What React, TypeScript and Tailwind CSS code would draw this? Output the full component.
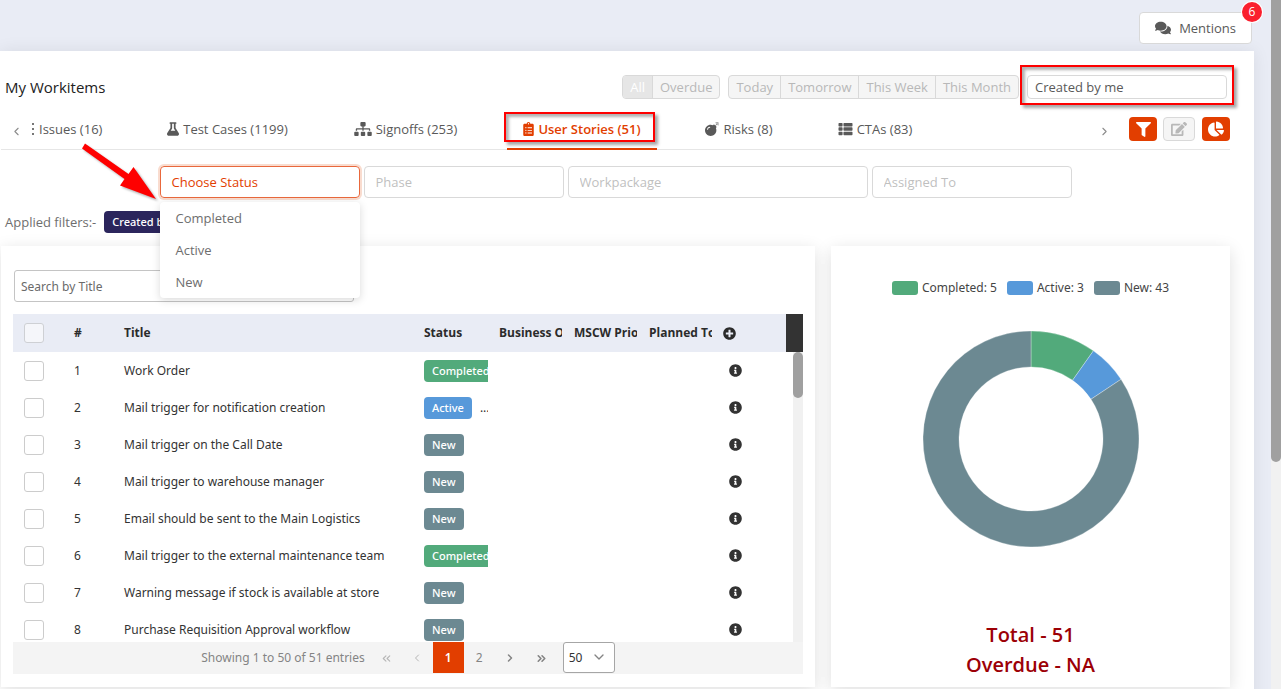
import React, { useState } from "react";
import {
  FaBomb,
  FaChartPie,
  FaClipboardList,
  FaComments,
  FaEdit,
  FaFilter,
  FaFlask,
  FaInfoCircle,
  FaPlusCircle,
  FaSitemap,
  FaThList,
} from "react-icons/fa";
import { ChevronDown, ChevronLeft, ChevronRight, ChevronsLeft, ChevronsRight } from "lucide-react";

type Status = "Completed" | "Active" | "New";

const statusBg: Record<Status, string> = {
  Completed: "bg-[#52aa7b]",
  Active: "bg-[#5799da]",
  New: "bg-[#6c8992]",
};

const stories: { title: string; status: Status; more?: boolean }[] = [
  { title: "Work Order", status: "Completed" },
  { title: "Mail trigger for notification creation", status: "Active", more: true },
  { title: "Mail trigger on the Call Date", status: "New" },
  { title: "Mail trigger to warehouse manager", status: "New" },
  { title: "Email should be sent to the Main Logistics", status: "New" },
  { title: "Mail trigger to the external maintenance team", status: "Completed" },
  { title: "Warning message if stock is available at store", status: "New" },
  { title: "Purchase Requisition Approval workflow", status: "New" },
];

const tabs = [
  { label: "Test Cases (1199)", icon: FaFlask, iconWidth: "w-3", width: "w-[153px]" },
  { label: "Signoffs (253)", icon: FaSitemap, iconWidth: "w-[18px]", width: "w-[139px]" },
  { label: "User Stories (51)", icon: FaClipboardList, iconWidth: "w-[11px]", width: "w-[150px]", active: true },
  { label: "Risks (8)", icon: FaBomb, iconWidth: "w-[14px]", width: "w-[100px]" },
  { label: "CTAs (83)", icon: FaThList, iconWidth: "w-[15px]", width: "w-[108px]" },
];

const chartData: { label: Status; value: number; color: string }[] = [
  { label: "Completed", value: 5, color: "#52aa7b" },
  { label: "Active", value: 3, color: "#5799da" },
  { label: "New", value: 43, color: "#6c8992" },
];

const Donut: React.FC = () => {
  const total = chartData.reduce((sum, d) => sum + d.value, 0);
  const point = (value: number, r: number) => {
    const a = (value / total) * Math.PI * 2;
    return `${108 + r * Math.sin(a)} ${108 - r * Math.cos(a)}`;
  };
  let start = 0;

  return (
    <svg viewBox="0 0 216 216" className="w-[216px] h-[216px]" role="img" aria-label="User stories by status">
      {chartData.map((d) => {
        const from = start;
        const to = start + d.value;
        start = to;
        const large = d.value > total / 2 ? 1 : 0;
        return (
          <path
            key={d.label}
            fill={d.color}
            stroke="#fff"
            strokeWidth="0.3"
            d={`M${point(from, 108)} A108 108 0 ${large} 1 ${point(to, 108)} L${point(to, 72)} A72 72 0 ${large} 0 ${point(from, 72)} Z`}
          />
        );
      })}
    </svg>
  );
};

const FilterSelect: React.FC<{ label: string; className: string }> = ({ label, className }) => (
  <select
    aria-label={label}
    className={`h-8 appearance-none rounded border border-[#d9d9d9] bg-white px-[11px] text-[13px] text-[#bfbfbf] ${className}`}
  >
    <option>{label}</option>
  </select>
);

const StatusFilter: React.FC = () => {
  const [open, setOpen] = useState(true);
  return (
    <div className="relative w-[200px]">
      <button
        type="button"
        aria-haspopup="listbox"
        aria-expanded={open}
        onClick={() => setOpen(!open)}
        className="h-8 w-full rounded border border-[#e9683c] px-[11px] text-left text-[#e23e00] shadow-[0_0_0_2px_#f9dccf]"
      >
        Choose Status
      </button>
      {open && (
        <ul
          role="listbox"
          aria-label="Choose Status"
          className="absolute left-0 top-9 z-20 w-full rounded bg-white shadow-[0_2px_8px_rgba(0,0,0,0.15)]"
        >
          {["Completed", "Active", "New"].map((s) => (
            <li key={s} role="option" aria-selected={false} className="h-8 px-4 leading-8 text-[#6e6e6e]">
              {s}
            </li>
          ))}
        </ul>
      )}

      {/* Pointer to the open list */}
      <svg className="pointer-events-none absolute -left-20 -top-6 z-30 h-16 w-20 overflow-visible" viewBox="0 0 80 64" aria-hidden="true">
        <path
          d="M5 1.5 L48.500 32 L53.500 25 L76 57 L40 43.500 L44.500 37 L2 6.500 Z"
          fill="#fe0000"
          style={{ filter: "drop-shadow(2px 2px 1px rgba(0,0,0,0.3))" }}
        />
      </svg>
    </div>
  );
};

const Segment: React.FC<{ items: string[]; selected?: string }> = ({ items, selected }) => (
  <div className="flex h-6 divide-x divide-[#d9d9d9] overflow-hidden rounded border border-[#d9d9d9] bg-[#f5f5f5] text-[#b8b8b8]">
    {items.map((item) => (
      <button
        key={item}
        type="button"
        className={item === selected ? "bg-[#e6e6e6] px-[7px] text-white" : "px-[7px]"}
      >
        {item}
      </button>
    ))}
  </div>
);

const StoriesTable: React.FC = () => (
  <div className="flex h-[328px] overflow-hidden">
    <div className="min-w-0 flex-1 overflow-hidden">
      <table className="w-full table-fixed border-collapse text-left font-['Noto_Sans',sans-serif] text-xs text-[#333]">
        <colgroup>
          <col className="w-[50px]" />
          <col className="w-[50px]" />
          <col />
          <col className="w-[75px]" />
          <col className="w-[75px]" />
          <col className="w-[75px]" />
          <col className="w-[75px]" />
          <col className="w-[73px]" />
        </colgroup>
        <thead className="bg-[#e9ecf5] font-['Open_Sans','Noto_Sans',sans-serif] font-bold text-[#2b2b2b]">
          <tr className="h-[38px]">
            <th className="pl-[11px]">
              <input
                type="checkbox"
                aria-label="Select all"
                className="block h-5 w-5 appearance-none rounded-[3px] border border-[#ced0d4] bg-[#f5f6fa]"
              />
            </th>
            <th className="pl-[11px]">#</th>
            <th className="pl-[11px]">Title</th>
            <th className="pl-[11px]">Status</th>
            {["Business Owner", "MSCW Priority", "Planned Total"].map((h) => (
              <th key={h} className="pl-[11px]">
                <div className="w-[63px] overflow-hidden whitespace-nowrap">{h}</div>
              </th>
            ))}
            <th className="pl-[10px]">
              <button type="button" aria-label="Add column" className="block">
                <FaPlusCircle className="h-[13px] w-[13px]" />
              </button>
            </th>
          </tr>
        </thead>
        <tbody>
          {stories.map((row, i) => (
            <tr key={row.title} className="h-[37px]">
              <td className="pl-[11px]">
                <input
                  type="checkbox"
                  aria-label={`Select ${row.title}`}
                  className="block h-5 w-5 appearance-none rounded-[3px] border border-[#ccc] bg-white"
                />
              </td>
              <td className="pl-[11px]">{i + 1}</td>
              <td className="truncate pl-[11px]">{row.title}</td>
              <td className="overflow-hidden whitespace-nowrap pl-[11px]">
                <span className={`inline-block h-[22px] rounded px-2 text-[11px] font-medium leading-[22px] text-white ${statusBg[row.status]}`}>
                  {row.status}
                </span>
                {row.more && <span className="pl-2">...</span>}
              </td>
              <td />
              <td />
              <td />
              <td className="pl-4">
                <button type="button" aria-label="Details" className="block">
                  <FaInfoCircle className="h-[13px] w-[13px]" />
                </button>
              </td>
            </tr>
          ))}
        </tbody>
      </table>
    </div>
    {/* Scrollbar */}
    <div className="flex w-[17px] flex-col items-end">
      <div className="h-[38px] w-full bg-[#333]" />
      <div className="w-[10px] flex-1 bg-[#f1f1f1]">
        <div className="h-[46px] rounded-full bg-[#a0a0a0]" />
      </div>
    </div>
  </div>
);

const Pagination: React.FC = () => (
  <div className="flex h-8 items-center justify-center bg-[#f4f4f4] font-['Noto_Sans',sans-serif] text-xs text-[#848484]">
    <span className="mr-2">Showing 1 to 50 of 51 entries</span>
    <button type="button" aria-label="First page" className="flex w-7 justify-center text-[#b5b5b5]">
      <ChevronsLeft size={13} />
    </button>
    <button type="button" aria-label="Previous page" className="flex w-8 justify-center text-[#b5b5b5]">
      <ChevronLeft size={12} />
    </button>
    <button type="button" className="h-[31px] w-[31px] self-start bg-[#e23e00] font-semibold text-white">
      1
    </button>
    <button type="button" className="w-[31px]">
      2
    </button>
    <button type="button" aria-label="Next page" className="flex w-[31px] justify-center">
      <ChevronRight size={12} strokeWidth={3} />
    </button>
    <button type="button" aria-label="Last page" className="flex w-[31px] justify-center">
      <ChevronsRight size={13} strokeWidth={3} />
    </button>
    <div className="relative ml-[6px] self-start">
      <select
        aria-label="Rows per page"
        className="block h-[31px] w-[52px] appearance-none rounded-[3px] border border-[#a6a6a6] bg-white pl-[5px] text-[#333]"
      >
        <option>50</option>
      </select>
      <ChevronDown size={16} className="pointer-events-none absolute right-2 top-[7px]" />
    </div>
  </div>
);

const App: React.FC = () => {
  return (
    <div className="flex h-screen overflow-hidden bg-[#e9ecf5] font-['Open_Sans','Noto_Sans',sans-serif] text-[13px] leading-5">
      <div className="min-w-0 flex-1 pr-[17px]">
        {/* TOP BAR */}
        <header className="flex h-[51px] items-start justify-end pr-[2px] pt-3">
          <button
            type="button"
            className="relative flex h-8 items-center gap-2 rounded border border-[#d9d9d9] bg-white px-[15px] text-[#595959]"
          >
            <FaComments className="h-4 w-4" />
            Mentions
            <span className="absolute -right-[11px] -top-[11px] h-5 w-5 rounded-full bg-[#fa1f2e] text-center text-xs leading-5 text-white shadow-[0_0_0_1px_#fff]">
              6
            </span>
          </button>
        </header>

        <main className="h-full bg-white pl-px pr-6 pt-6 shadow-[0_0_16px_rgba(0,0,0,0.08)]">
          {/* TITLE AND DATE FILTERS */}
          <div className="flex h-6 items-center gap-2 pl-1 pr-[3px]">
            <h1 className="mr-auto text-[15px] text-[#222]">My Workitems</h1>
            <Segment items={["All", "Overdue"]} selected="All" />
            <Segment items={["Today", "Tomorrow", "This Week", "This Month"]} />
            <div className="relative">
              <select
                aria-label="Ownership"
                className="block h-6 w-[200px] appearance-none rounded border border-[#d9d9d9] bg-white px-[7px] text-[#595959]"
              >
                <option>Created by me</option>
              </select>
              <div className="pointer-events-none absolute -inset-x-[7px] -bottom-[6px] -top-[10px] border-2 border-[#fe0000] shadow-[3px_3px_3px_rgba(0,0,0,0.35),inset_3px_3px_3px_rgba(0,0,0,0.3)]" />
            </div>
          </div>

          {/* TABS */}
          <div className="mt-[10px] flex h-[41px] items-center border-b border-[#e6e6e6] text-[#595959]">
            <button type="button" aria-label="Scroll tabs left" className="flex w-[30px] justify-center pt-1 text-[#8c8c8c]">
              <ChevronLeft size={13} />
            </button>
            <nav className="flex h-[41px] gap-8 whitespace-nowrap" aria-label="Workitem types">
              <button type="button" className="flex w-[88px] items-center pl-px">
                <span aria-hidden="true" className="mr-[5px] flex flex-col gap-[3px]">
                  <i className="h-[2px] w-[2px] bg-[#777]" />
                  <i className="h-[2px] w-[2px] bg-[#777]" />
                  <i className="h-[2px] w-[2px] bg-[#777]" />
                </span>
                Issues (16)
              </button>
              {tabs.map(({ label, icon: Icon, iconWidth, width, active }) => (
                <button
                  key={label}
                  type="button"
                  className={`relative flex items-center justify-center gap-1 ${width} ${
                    active ? "border-b-2 border-[#e23e00] pt-[2px] font-semibold text-[#e23e00]" : ""
                  }`}
                >
                  <Icon className={`h-[14px] ${iconWidth}`} />
                  {label}
                  {active && (
                    <span className="pointer-events-none absolute -left-[3px] right-[2px] top-[3px] h-[30px] border-2 border-[#fe0000] shadow-[3px_3px_3px_rgba(0,0,0,0.35),inset_3px_3px_3px_rgba(0,0,0,0.3)]" />
                  )}
                </button>
              ))}
            </nav>
            <button type="button" aria-label="Scroll tabs right" className="ml-auto mr-[18px] flex pt-1 text-[#8c8c8c]">
              <ChevronRight size={13} />
            </button>
            <div className="flex gap-[6px]">
              <button type="button" aria-label="Filter" className="flex h-6 w-7 items-center justify-center rounded bg-[#e23e00] text-white">
                <FaFilter size={15} />
              </button>
              <button type="button" aria-label="Edit" className="flex h-6 w-8 items-center justify-center rounded border border-[#d9d9d9] bg-[#f5f5f5] text-[#b8b8b8]">
                <FaEdit size={16} />
              </button>
              <button type="button" aria-label="Chart" className="ml-px flex h-6 w-7 items-center justify-center rounded bg-[#e23e00] text-white">
                <FaChartPie size={16} />
              </button>
            </div>
          </div>

          {/* FILTERS */}
          <div className="mt-4 flex justify-center gap-1">
            <StatusFilter />
            <FilterSelect label="Phase" className="w-[200px]" />
            <FilterSelect label="Workpackage" className="w-[300px]" />
            <FilterSelect label="Assigned To" className="w-[200px]" />
          </div>
          <div className="mt-3 flex items-center gap-2 pl-1 text-[#6e6e6e]">
            Applied filters:-
            <span className="my-px h-[22px] rounded bg-[#2b255c] px-2 font-['Noto_Sans',sans-serif] text-[11px] font-medium leading-[22px] text-white">
              Created by me
            </span>
          </div>

          {/* CARDS */}
          <div className="mt-3 flex gap-4">
            <section className="h-[441px] min-w-0 flex-1 bg-white px-3 pt-6 shadow-[0_4px_16px_rgba(0,0,0,0.13)]">
              <input
                type="text"
                placeholder="Search by Title"
                aria-label="Search by Title"
                className="ml-px block h-8 w-[340px] rounded-[3px] border border-[#c4c4c4] px-[6px] font-['Noto_Sans',sans-serif] text-xs placeholder:text-[#6a6a6a]"
              />
              <div className="mt-3">
                <StoriesTable />
                <Pagination />
              </div>
            </section>

            <section className="flex h-[441px] w-[399px] flex-col items-center bg-white pt-8 shadow-[0_4px_16px_rgba(0,0,0,0.13)]">
              <ul className="flex gap-[10px] font-['Noto_Sans',sans-serif] text-xs leading-5 text-[#444]">
                {chartData.map((d) => (
                  <li key={d.label} className="flex items-center gap-1">
                    <span className={`h-[14px] w-[26px] rounded-[3px] ${statusBg[d.label]}`} />
                    {d.label}: {d.value}
                  </li>
                ))}
              </ul>
              <div className="mt-[33px]">
                <Donut />
              </div>
              <div className="mt-[73px] text-center text-xl font-semibold leading-[30px] text-[#9c0006]">
                <p>Total - 51</p>
                <p>Overdue - NA</p>
              </div>
            </section>
          </div>
        </main>
      </div>

      {/* PAGE SCROLLBAR */}
      <div className="w-[10px] bg-[#f1f1f1]">
        <div className="h-[67%] rounded-b-full bg-[#a0a0a0]" />
      </div>
    </div>
  );
};

export default App;
